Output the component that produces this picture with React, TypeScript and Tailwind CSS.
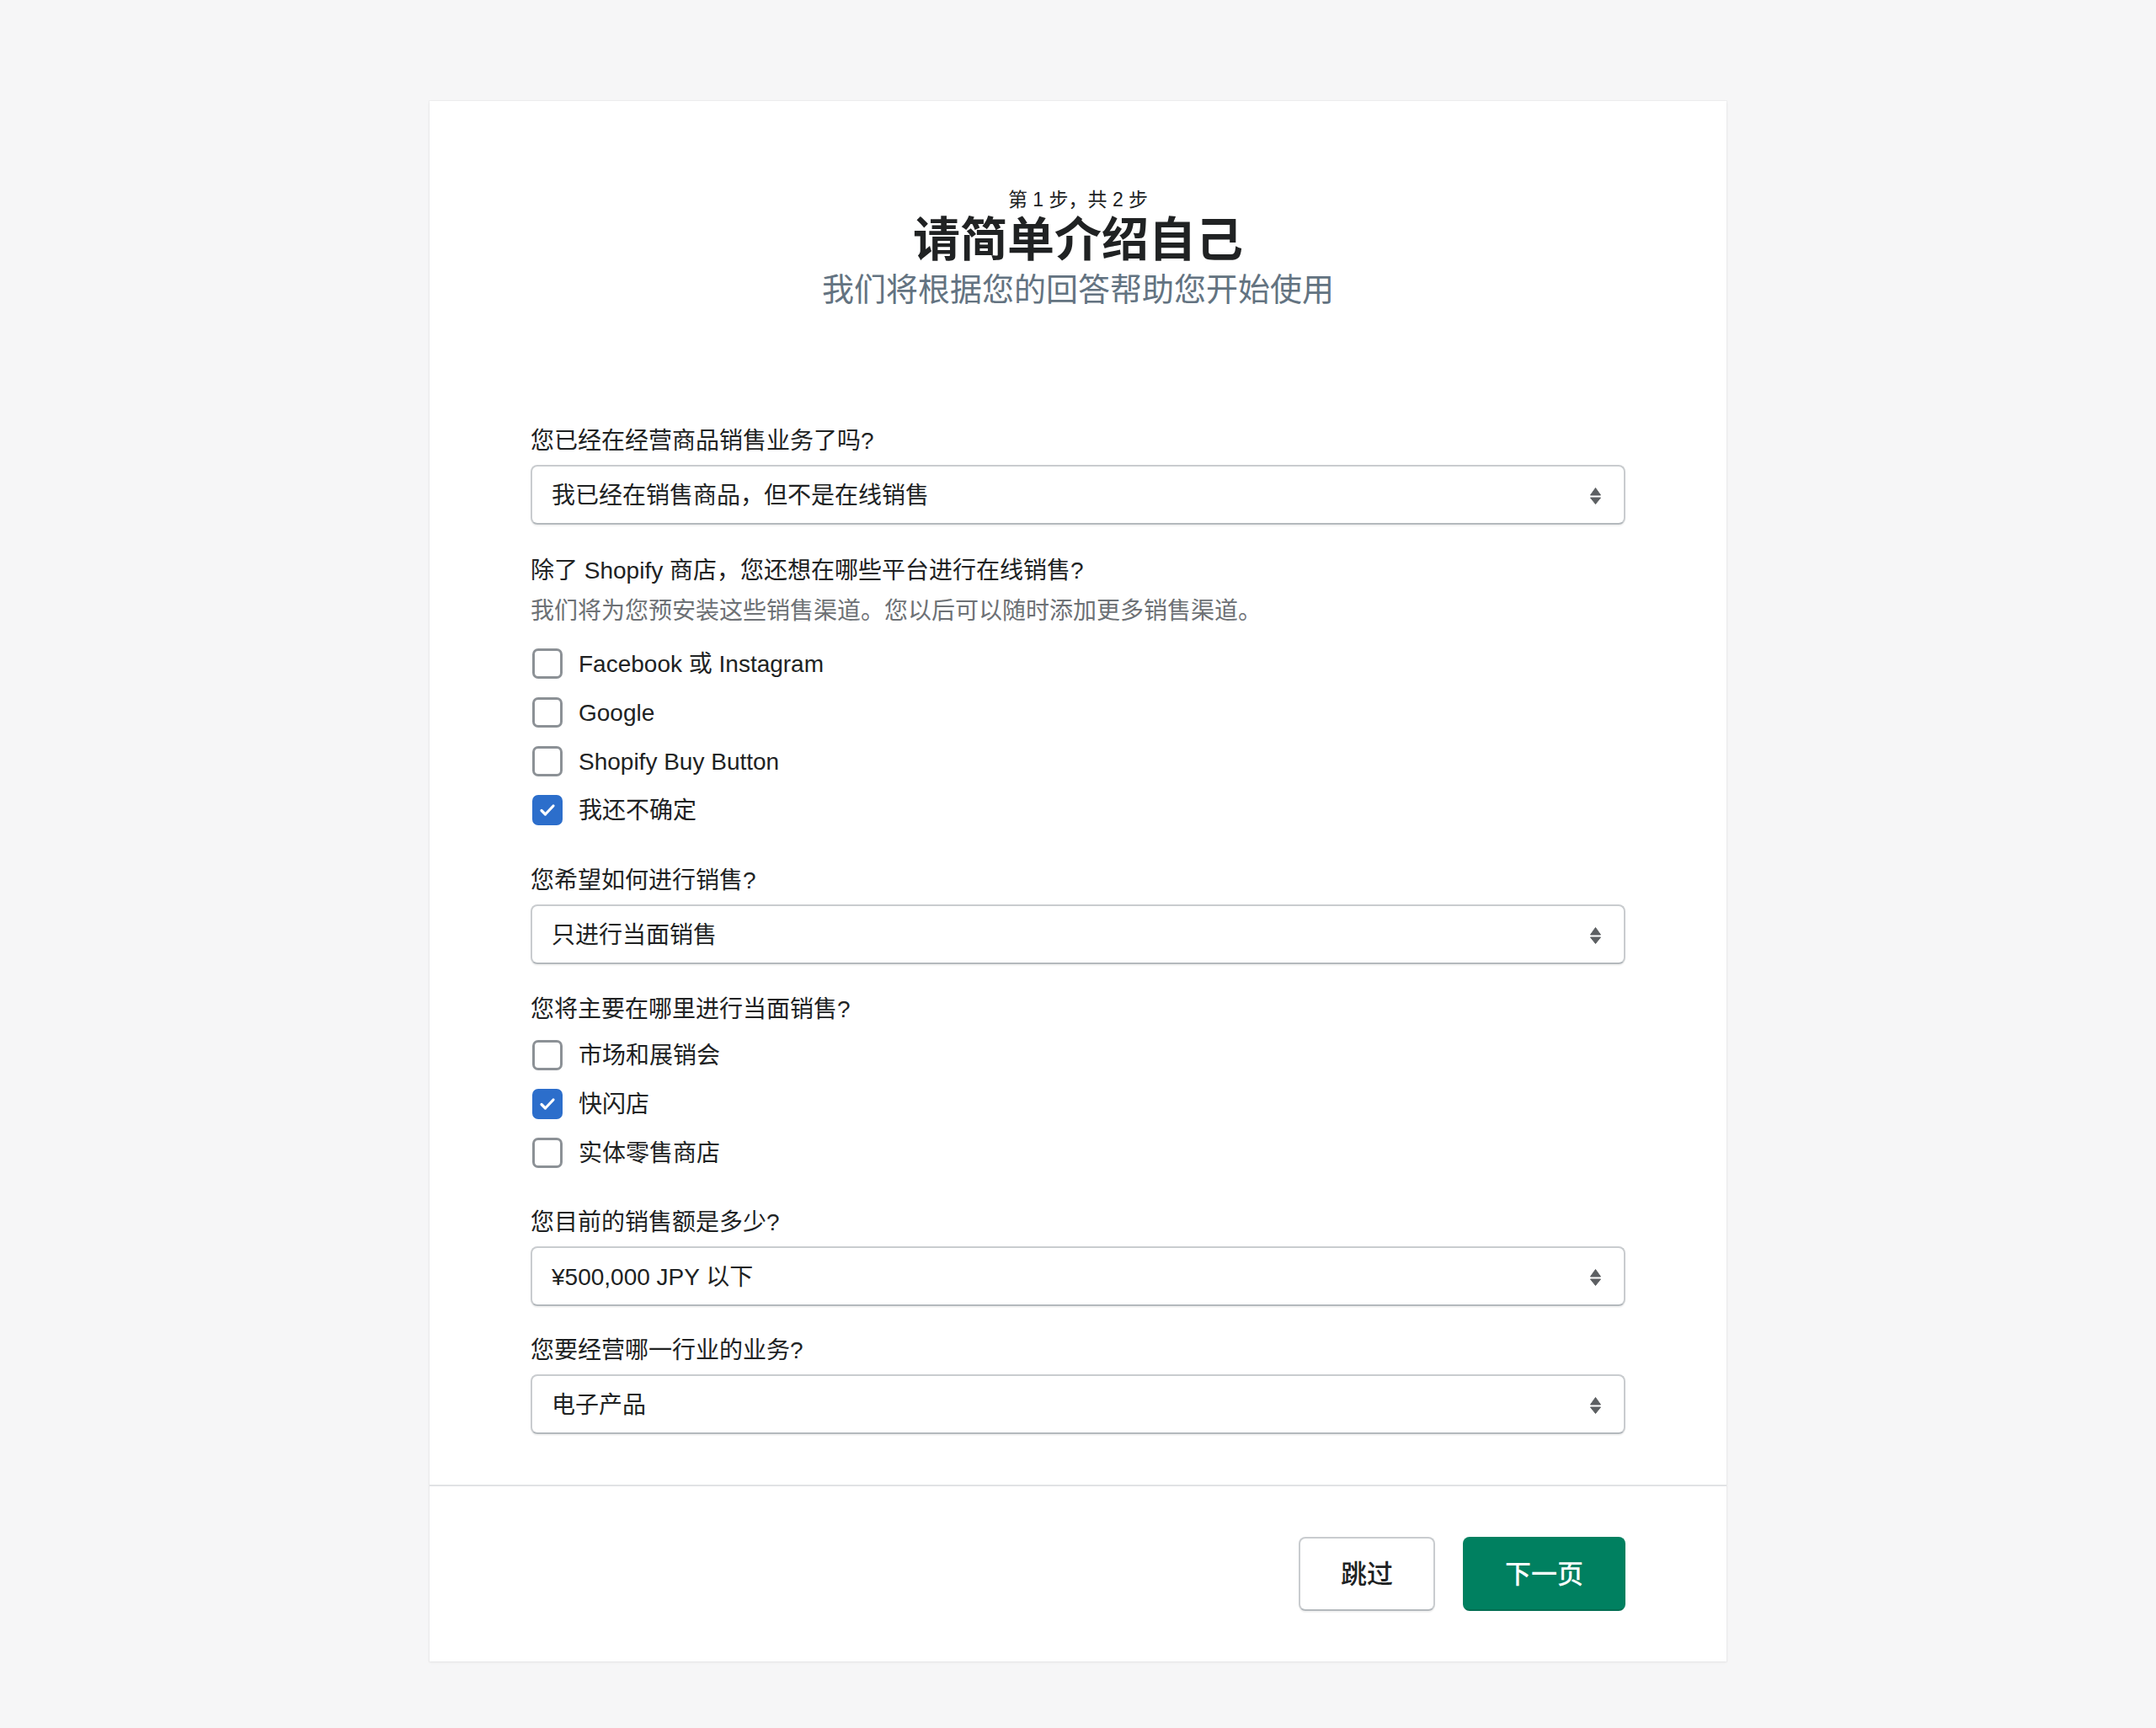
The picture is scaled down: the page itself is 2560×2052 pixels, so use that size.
import { useState } from "react";

const font = "font-['Liberation_Sans','Noto_Sans_CJK_SC',sans-serif]";

const SelectArrows = () => (
  <svg width="13" height="20" viewBox="0 0 13 20" className="shrink-0">
    <path d="M6.5 0.5 L12.5 9 H0.5 Z" fill="#5c5f62" strokeLinejoin="round" stroke="#5c5f62" strokeWidth="1" />
    <path d="M0.5 12 H12.5 L6.5 19.5 Z" fill="#5c5f62" strokeLinejoin="round" stroke="#5c5f62" strokeWidth="1" />
  </svg>
);

const Select = ({ value }: { value: string }) => (
  <div className="flex h-[71px] items-center justify-between rounded-[8px] border-2 border-[#c9cccf] border-b-[#b4b9bd] bg-white pl-[23px] pr-[27px] pt-[3px] shadow-[0_2px_1px_rgba(0,0,0,0.05)]">
    <span className="text-[28px] leading-[40px] text-[#202223]">{value}</span>
    <SelectArrows />
  </div>
);

const Checkbox = ({ label, checked, onToggle }: { label: string; checked: boolean; onToggle: () => void }) => (
  <button type="button" onClick={onToggle} className="ml-[2px] flex h-[58px] items-center gap-[19px] text-left">
    {checked ? (
      <span className="flex h-[36px] w-[36px] items-center justify-center rounded-[7px] bg-[#2c6ecb]">
        <svg width="20" height="16" viewBox="0 0 20 16">
          <path d="M3 8.5 L7.5 13 L17 3" fill="none" stroke="white" strokeWidth="3.2" strokeLinecap="round" strokeLinejoin="round" />
        </svg>
      </span>
    ) : (
      <span className="h-[36px] w-[36px] rounded-[7px] border-[3px] border-[#8c9196] bg-white" />
    )}
    <span className="pt-[2px] text-[28px] leading-[40px] text-[#202223]">{label}</span>
  </button>
);

const Label = ({ children, className = "" }: { children: React.ReactNode; className?: string }) => (
  <div className={`text-[28px] leading-[40px] text-[#202223] ${className}`}>{children}</div>
);

export default function App() {
  const [channels, setChannels] = useState({ fb: false, google: false, buy: false, unsure: true });
  const [places, setPlaces] = useState({ market: false, popup: true, retail: false });

  return (
    <div className={`min-h-screen bg-[#f6f6f7] pt-[120px] pb-[80px] ${font}`}>
      <div className="mx-auto w-[1540px] bg-white shadow-[0_0_0_1px_rgba(63,63,68,0.03),0_1px_3px_rgba(63,63,68,0.08)]">
        <div className="px-[120px] pt-[103px] pb-[60px]">
          {/* header */}
          <div className="flex flex-col items-center text-center">
            <div className="text-[23px] leading-[28px] text-[#202223]">第 1 步，共 2 步</div>
            <h1 className="mt-[2px] text-[56px] font-bold leading-[64px] text-[#202223]">请简单介绍自己</h1>
            <p className="mt-[3px] text-[38px] leading-[48px] text-[#637381]">我们将根据您的回答帮助您开始使用</p>
          </div>

          <div className="mt-[136px] flex flex-col">
            <Label className="mb-[8px]">您已经在经营商品销售业务了吗?</Label>
            <Select value="我已经在销售商品，但不是在线销售" />

            <Label className="mt-[35px]">除了 Shopify 商店，您还想在哪些平台进行在线销售?</Label>
            <div className="mt-[8px] text-[28px] leading-[40px] text-[#6d7175]">
              我们将为您预安装这些销售渠道。您以后可以随时添加更多销售渠道。
            </div>
            <div className="mt-[13px] flex flex-col items-start">
              <Checkbox label="Facebook 或 Instagram" checked={channels.fb} onToggle={() => setChannels({ ...channels, fb: !channels.fb })} />
              <Checkbox label="Google" checked={channels.google} onToggle={() => setChannels({ ...channels, google: !channels.google })} />
              <Checkbox label="Shopify Buy Button" checked={channels.buy} onToggle={() => setChannels({ ...channels, buy: !channels.buy })} />
              <Checkbox label="我还不确定" checked={channels.unsure} onToggle={() => setChannels({ ...channels, unsure: !channels.unsure })} />
            </div>

            <Label className="mt-[35px] mb-[8px]">您希望如何进行销售?</Label>
            <Select value="只进行当面销售" />

            <Label className="mt-[34px]">您将主要在哪里进行当面销售?</Label>
            <div className="mt-[5px] flex flex-col items-start">
              <Checkbox label="市场和展销会" checked={places.market} onToggle={() => setPlaces({ ...places, market: !places.market })} />
              <Checkbox label="快闪店" checked={places.popup} onToggle={() => setPlaces({ ...places, popup: !places.popup })} />
              <Checkbox label="实体零售商店" checked={places.retail} onToggle={() => setPlaces({ ...places, retail: !places.retail })} />
            </div>

            <Label className="mt-[34px] mb-[8px]">您目前的销售额是多少?</Label>
            <Select value="¥500,000 JPY 以下" />

            <Label className="mt-[33px] mb-[8px]">您要经营哪一行业的业务?</Label>
            <Select value="电子产品" />
          </div>
        </div>

        {/* footer */}
        <div className="flex justify-end gap-[33px] border-t-2 border-[#e1e3e5] px-[120px] pt-[60px] pb-[60px]">
          <button className="h-[88px] rounded-[8px] border-2 border-[#c9cccf] border-b-[#b4b9bd] bg-white px-[48px] pt-[2px] text-[31px] font-medium text-[#202223] shadow-[0_2px_1px_rgba(0,0,0,0.05)]">
            跳过
          </button>
          <button className="h-[88px] rounded-[8px] border-2 border-[#008060] border-b-[#006e52] bg-[#008060] px-[48px] pt-[2px] text-[31px] font-medium text-white">
            下一页
          </button>
        </div>
      </div>
    </div>
  );
}
